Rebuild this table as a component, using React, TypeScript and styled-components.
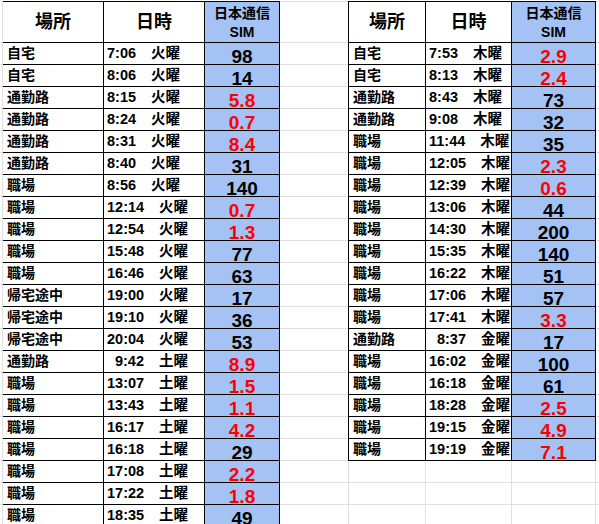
import styled, { createGlobalStyle } from 'styled-components';

interface Entry {
  place: string;
  time: string;
  day: string;
  sim: string;
  pad?: boolean;
}

const GRID = '#e0e0e0';
const INK = '#000';
const BLUE = '#a4c2f4';
const RED = '#ff0000';

const tuesdayThursday: Entry[] = [
  { place: '自宅', time: '7:06', day: '火曜', sim: '98' },
  { place: '自宅', time: '8:06', day: '火曜', sim: '14' },
  { place: '通勤路', time: '8:15', day: '火曜', sim: '5.8' },
  { place: '通勤路', time: '8:24', day: '火曜', sim: '0.7' },
  { place: '通勤路', time: '8:31', day: '火曜', sim: '8.4' },
  { place: '通勤路', time: '8:40', day: '火曜', sim: '31' },
  { place: '職場', time: '8:56', day: '火曜', sim: '140' },
  { place: '職場', time: '12:14', day: '火曜', sim: '0.7' },
  { place: '職場', time: '12:54', day: '火曜', sim: '1.3' },
  { place: '職場', time: '15:48', day: '火曜', sim: '77' },
  { place: '職場', time: '16:46', day: '火曜', sim: '63' },
  { place: '帰宅途中', time: '19:00', day: '火曜', sim: '17' },
  { place: '帰宅途中', time: '19:10', day: '火曜', sim: '36' },
  { place: '帰宅途中', time: '20:04', day: '火曜', sim: '53' },
  { place: '通勤路', time: '9:42', day: '土曜', sim: '8.9', pad: true },
  { place: '職場', time: '13:07', day: '土曜', sim: '1.5' },
  { place: '職場', time: '13:43', day: '土曜', sim: '1.1' },
  { place: '職場', time: '16:17', day: '土曜', sim: '4.2' },
  { place: '職場', time: '16:18', day: '土曜', sim: '29' },
  { place: '職場', time: '17:08', day: '土曜', sim: '2.2' },
  { place: '職場', time: '17:22', day: '土曜', sim: '1.8' },
  { place: '職場', time: '18:35', day: '土曜', sim: '49' },
];

const thursdayFriday: Entry[] = [
  { place: '自宅', time: '7:53', day: '木曜', sim: '2.9' },
  { place: '自宅', time: '8:13', day: '木曜', sim: '2.4' },
  { place: '通勤路', time: '8:43', day: '木曜', sim: '73' },
  { place: '通勤路', time: '9:08', day: '木曜', sim: '32' },
  { place: '職場', time: '11:44', day: '木曜', sim: '35' },
  { place: '職場', time: '12:05', day: '木曜', sim: '2.3' },
  { place: '職場', time: '12:39', day: '木曜', sim: '0.6' },
  { place: '職場', time: '13:06', day: '木曜', sim: '44' },
  { place: '職場', time: '14:30', day: '木曜', sim: '200' },
  { place: '職場', time: '15:35', day: '木曜', sim: '140' },
  { place: '職場', time: '16:22', day: '木曜', sim: '51' },
  { place: '職場', time: '17:06', day: '木曜', sim: '57' },
  { place: '職場', time: '17:41', day: '木曜', sim: '3.3' },
  { place: '通勤路', time: '8:37', day: '金曜', sim: '17', pad: true },
  { place: '職場', time: '16:02', day: '金曜', sim: '100' },
  { place: '職場', time: '16:18', day: '金曜', sim: '61' },
  { place: '職場', time: '18:28', day: '金曜', sim: '2.5' },
  { place: '職場', time: '19:15', day: '金曜', sim: '4.9' },
  { place: '職場', time: '19:19', day: '金曜', sim: '7.1' },
];

const SHEET_ROWS = 22;

function SpeedTable({ rows, cols, bordered }: { rows: Entry[]; cols: string; bordered?: boolean }) {
  return (
    <Table $cols={cols} $bordered={bordered}>
      <HeaderCell>場所</HeaderCell>
      <HeaderCell>日時</HeaderCell>
      <HeaderCell $blue $small>
        日本通信
        <br />
        SIM
      </HeaderCell>
      {rows.map((row, i) => (
        <Row key={i}>
          <PlaceCell>{row.place}</PlaceCell>
          <TimeCell>
            <TimeValue $pad={row.pad}>{row.time}</TimeValue>
            <span>{row.day}</span>
          </TimeCell>
          <SimCell $low={parseFloat(row.sim) < 10}>{row.sim}</SimCell>
        </Row>
      ))}
    </Table>
  );
}

function BlankColumn({ width, edge }: { width?: number; edge?: boolean }) {
  return (
    <Filler $width={width} $edge={edge}>
      <BlankCell $header />
      {Array.from({ length: SHEET_ROWS }, (_, i) => (
        <BlankCell key={i} />
      ))}
    </Filler>
  );
}

export default function App() {
  return (
    <>
      <GlobalStyle />
      <Sheet>
        <BlankColumn width={3} edge />
        <SpeedTable rows={tuesdayThursday} cols="101px 101px 75px" />
        <BlankColumn width={68} />
        <RightStack>
          <SpeedTable rows={thursdayFriday} cols="77px 86px 84px" bordered />
          <BlankGrid>
            {Array.from({ length: 9 }, (_, i) => (
              <GridCell key={i} />
            ))}
          </BlankGrid>
        </RightStack>
        <BlankColumn />
      </Sheet>
    </>
  );
}

const GlobalStyle = createGlobalStyle`
  html, body {
    margin: 0;
    padding: 0;
    background: #fff;
  }
  body {
    font-family: "Liberation Sans", "Noto Sans CJK JP", sans-serif;
    color: ${INK};
    overflow: hidden;
  }
`;

const Sheet = styled.div`
  display: flex;
  align-items: flex-start;
  width: 599px;
  height: 524px;
  padding-top: 1px;
  box-sizing: border-box;
  overflow: hidden;
`;

const Filler = styled.div<{ $width?: number; $edge?: boolean }>`
  display: flex;
  flex-direction: column;
  flex: ${({ $width }) => ($width ? `0 0 ${$width}px` : '1')};
  box-sizing: border-box;
  border-top: 1px solid ${GRID};
  border-right: ${({ $edge }) => ($edge ? `1px solid ${GRID}` : 'none')};
`;

const BlankCell = styled.div<{ $header?: boolean }>`
  height: ${({ $header }) => ($header ? 41 : 22)}px;
  box-sizing: border-box;
  border-bottom: 1px solid ${GRID};
`;

const Table = styled.div<{ $cols: string; $bordered?: boolean }>`
  display: grid;
  grid-template-columns: ${({ $cols }) => $cols};
  border-top: 1px solid ${INK};
  border-left: ${({ $bordered }) => ($bordered ? `1px solid ${INK}` : 'none')};
  font-weight: 700;
`;

const Row = styled.div`
  display: contents;
`;

const Cell = styled.div`
  height: 22px;
  box-sizing: border-box;
  border-right: 1px solid ${INK};
  border-bottom: 1px solid ${INK};
  overflow: hidden;
  white-space: nowrap;
`;

const HeaderCell = styled(Cell)<{ $blue?: boolean; $small?: boolean }>`
  height: 41px;
  display: flex;
  align-items: center;
  justify-content: center;
  text-align: center;
  background: ${({ $blue }) => ($blue ? BLUE : '#fff')};
  font-size: ${({ $small }) => ($small ? 14 : 18)}px;
  line-height: ${({ $small }) => ($small ? 19 : 22)}px;
  padding-top: ${({ $small }) => ($small ? 1 : 0)}px;
`;

const PlaceCell = styled(Cell)`
  padding-left: 4px;
  font-size: 14px;
  line-height: 21px;
`;

const TimeCell = styled(Cell)`
  display: flex;
  gap: 15px;
  padding-left: 3px;
  font-size: 14.5px;
  line-height: 21px;
`;

const TimeValue = styled.span<{ $pad?: boolean }>`
  flex: none;
  width: ${({ $pad }) => ($pad ? '37px' : 'auto')};
  text-align: right;
`;

const SimCell = styled(Cell)<{ $low: boolean }>`
  background: ${BLUE};
  color: ${({ $low }) => ($low ? RED : INK)};
  text-align: center;
  font-size: 19px;
  line-height: 19px;
  padding-top: 4px;
  overflow: visible;
`;

const RightStack = styled.div`
  display: flex;
  flex-direction: column;
`;

const BlankGrid = styled.div`
  display: grid;
  grid-template-columns: 77px 86px 84px;
  border-left: 1px solid ${GRID};
`;

const GridCell = styled.div`
  height: 22px;
  box-sizing: border-box;
  border-right: 1px solid ${GRID};
  border-bottom: 1px solid ${GRID};
`;
